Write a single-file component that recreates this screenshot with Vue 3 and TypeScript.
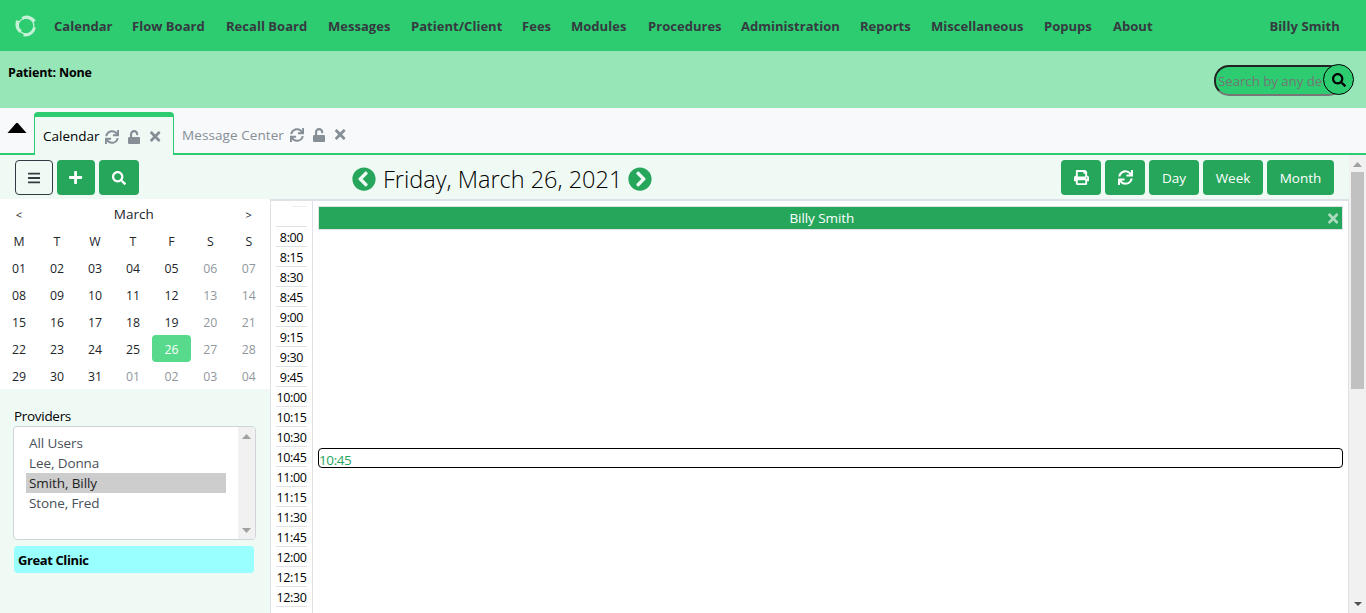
<script setup lang="ts">
import { h, type FunctionalComponent } from 'vue'

const icons: Record<string, [number, string]> = {
  sync: [512, 'M440.65 12.57l4 82.77A247.16 247.16 0 0 0 255.83 8C134.73 8 33.91 94.92 12.29 209.82A12 12 0 0 0 24.09 224h49.05a12 12 0 0 0 11.67-9.26 175.91 175.91 0 0 1 317-56.94l-101.46-4.86a12 12 0 0 0-12.57 12v47.41a12 12 0 0 0 12 12H500a12 12 0 0 0 12-12V12a12 12 0 0 0-12-12h-47.37a12 12 0 0 0-11.98 12.57zM255.83 432a175.61 175.61 0 0 1-146-77.8l101.8 4.87a12 12 0 0 0 12.57-12v-47.4a12 12 0 0 0-12-12H12a12 12 0 0 0-12 12V500a12 12 0 0 0 12 12h47.35a12 12 0 0 0 12-12.6l-4.15-82.57A247.17 247.17 0 0 0 255.83 504c121.11 0 221.93-86.92 243.55-201.82a12 12 0 0 0-11.8-14.18h-49.05a12 12 0 0 0-11.67 9.26A175.86 175.86 0 0 1 255.83 432z'],
  unlock: [448, 'M400 256H152V152.9c0-39.6 31.7-72.5 71.3-72.9 40-.4 72.7 32.1 72.7 72v16c0 13.3 10.7 24 24 24h32c13.3 0 24-10.7 24-24v-16C376 68 307.5-.3 223.5 0 139.5.3 72 69.5 72 153.5V256H48c-26.5 0-48 21.5-48 48v160c0 26.5 21.5 48 48 48h352c26.5 0 48-21.5 48-48V304c0-26.5-21.5-48-48-48z'],
  times: [352, 'M242.72 256l100.07-100.07c12.28-12.28 12.28-32.19 0-44.48l-22.24-22.24c-12.28-12.28-32.19-12.28-44.48 0L176 189.28 75.93 89.21c-12.28-12.28-32.19-12.28-44.48 0L9.21 111.45c-12.28 12.28-12.28 32.19 0 44.48L109.28 256 9.21 356.07c-12.28 12.28-12.28 32.19 0 44.48l22.24 22.24c12.28 12.28 32.2 12.28 44.48 0L176 322.72l100.07 100.07c12.28 12.28 32.2 12.28 44.48 0l22.24-22.24c12.28-12.28 12.28-32.19 0-44.48L242.72 256z'],
  search: [512, 'M505 442.7L405.3 343c-4.5-4.5-10.6-7-17-7H372c27.6-35.3 44-79.7 44-128C416 93.1 322.9 0 208 0S0 93.1 0 208s93.1 208 208 208c48.3 0 92.7-16.4 128-44v16.3c0 6.4 2.5 12.5 7 17l99.7 99.7c9.4 9.4 24.6 9.4 33.9 0l28.3-28.3c9.4-9.4 9.4-24.6.1-34zM208 336c-70.7 0-128-57.2-128-128 0-70.7 57.2-128 128-128 70.7 0 128 57.2 128 128 0 70.7-57.2 128-128 128z'],
  print: [512, 'M448 192V77.25c0-8.49-3.37-16.62-9.37-22.63L393.37 9.37c-6-6-14.14-9.37-22.63-9.37H96C78.33 0 64 14.33 64 32v160c-35.35 0-64 28.65-64 64v112c0 8.84 7.16 16 16 16h48v96c0 17.67 14.33 32 32 32h320c17.67 0 32-14.33 32-32v-96h48c8.84 0 16-7.16 16-16V256c0-35.35-28.65-64-64-64zm-64 256H128v-96h256v96zm0-224H128V64h192v48c0 8.84 7.16 16 16 16h48v96zm48 72c-13.25 0-24-10.75-24-24 0-13.26 10.75-24 24-24s24 10.74 24 24c0 13.25-10.75 24-24 24z'],
  plus: [448, 'M416 208H272V64c0-17.67-14.33-32-32-32h-32c-17.67 0-32 14.33-32 32v144H32c-17.67 0-32 14.33-32 32v32c0 17.67 14.33 32 32 32h144v144c0 17.67 14.33 32 32 32h32c17.67 0 32-14.33 32-32V304h144c17.67 0 32-14.33 32-32v-32c0-17.67-14.33-32-32-32z'],
  bars: [448, 'M16 132h416c8.837 0 16-7.163 16-16V76c0-8.837-7.163-16-16-16H16C7.163 60 0 67.163 0 76v40c0 8.837 7.163 16 16 16zm0 160h416c8.837 0 16-7.163 16-16v-40c0-8.837-7.163-16-16-16H16c-8.837 0-16 7.163-16 16v40c0 8.837 7.163 16 16 16zm0 160h416c8.837 0 16-7.163 16-16v-40c0-8.837-7.163-16-16-16H16c-8.837 0-16 7.163-16 16v40c0 8.837 7.163 16 16 16z'],
  left: [512, 'M256 504C119 504 8 393 8 256S119 8 256 8s248 111 248 248-111 248-248 248zM142.1 273l135.5 135.5c9.4 9.4 24.6 9.4 33.9 0l17-17c9.4-9.4 9.4-24.6 0-33.9L226.9 256l101.6-101.6c9.4-9.4 9.4-24.6 0-33.9l-17-17c-9.4-9.4-24.6-9.4-33.9 0L142.1 239c-9.4 9.4-9.4 24.6 0 34z'],
}

const Icon: FunctionalComponent<{ name: string; size: number }> = (props) => {
  const [width, d] = icons[props.name]
  return h(
    'svg',
    { viewBox: `0 0 ${width} 512`, width: (props.size * width) / 512, height: props.size, fill: 'currentColor' },
    [h('path', { d })],
  )
}
Icon.props = ['name', 'size']

const menu = ['Calendar', 'Flow Board', 'Recall Board', 'Messages', 'Patient/Client', 'Fees', 'Modules', 'Procedures', 'Administration', 'Reports', 'Miscellaneous', 'Popups', 'About']
const weekdays = ['M', 'T', 'W', 'T', 'F', 'S', 'S']
const days = Array.from({ length: 35 }, (_, i) => {
  const n = i < 31 ? i + 1 : i - 30
  return {
    label: String(n).padStart(2, '0'),
    muted: i > 30 || i % 7 > 4,
    selected: i === 25,
  }
})
const slots = Array.from({ length: 19 }, (_, i) => {
  const minutes = 480 + i * 15
  return `${Math.floor(minutes / 60)}:${String(minutes % 60).padStart(2, '0')}`
})
const providers = ['All Users', 'Lee, Donna', 'Smith, Billy', 'Stone, Fred']
const tabs = [
  { label: 'Calendar', active: true },
  { label: 'Message Center', active: false },
]
</script>

<template>
  <div class="app">
    <header class="topbar">
      <svg class="logo" width="22" height="22" viewBox="0 0 22 22" fill="none" stroke="#c5f1d7">
        <circle cx="11" cy="11" r="7.9" stroke-width="1.3" />
        <path d="M7.2 3.4C11 .9 16.5 2 19.6 6.4" stroke-width="3" />
        <path d="M2.6 5.6C1.2 10.6 2.8 14.4 5.8 16.6" stroke-width="3.2" />
        <path d="M8.5 19.8C14 20.8 18.4 17.4 19.6 12.4" stroke-width="2.8" />
      </svg>
      <nav class="menu"><span v-for="m in menu" :key="m">{{ m }}</span></nav>
      <span class="user">Billy Smith</span>
    </header>

    <section class="patient">
      <strong>Patient: None</strong>
      <div class="search">
        <div class="search-input">Search by any de</div>
        <button class="search-btn"><Icon name="search" :size="14" /></button>
      </div>
    </section>

    <div class="tabs">
      <div class="collapse"><svg width="20" height="12" viewBox="0 0 20 12"><path d="M.5 11L9 1.2q1-1 2 0L19.5 11z" /></svg></div>
      <div v-for="t in tabs" :key="t.label" class="tab" :class="{ active: t.active }">
        <span class="tab-label">{{ t.label }}</span>
        <Icon name="sync" :size="14" /><Icon name="unlock" :size="14" /><Icon name="times" :size="15" />
      </div>
      <div class="tabs-rest"></div>
    </div>

    <div class="body">
      <main class="main">
        <div class="toolbar">
          <div class="group">
            <button class="btn outline"><Icon name="bars" :size="14" /></button>
            <button class="btn plus"><Icon name="plus" :size="15" /></button>
            <button class="btn"><Icon name="search" :size="14" /></button>
          </div>
          <div class="date">
            <Icon name="left" :size="24" />
            <h1>Friday, March 26, 2021</h1>
            <Icon class="flip" name="left" :size="24" />
          </div>
          <div class="group">
            <button class="btn"><Icon name="print" :size="15" /></button>
            <button class="btn"><Icon name="sync" :size="15" /></button>
            <button class="btn day">Day</button>
            <button class="btn week">Week</button>
            <button class="btn month">Month</button>
          </div>
        </div>

        <div class="content">
          <aside class="side">
            <div class="mini">
              <span class="arrow">&lt;</span><span class="month-name">March</span><span class="arrow">&gt;</span>
              <span v-for="(w, i) in weekdays" :key="'w' + i">{{ w }}</span>
              <span v-for="(d, i) in days" :key="i" :class="{ muted: d.muted, selected: d.selected }">{{ d.label }}</span>
            </div>
            <div class="label">Providers</div>
            <div class="list">
              <ul>
                <li v-for="p in providers" :key="p" :class="{ chosen: p === 'Smith, Billy' }">{{ p }}</li>
              </ul>
              <div class="list-scroll">
                <svg width="9" height="5" viewBox="0 0 9 5"><path d="M0 5L4.5 0 9 5z" /></svg>
                <svg width="9" height="5" viewBox="0 0 9 5"><path d="M0 0L4.5 5 9 0z" /></svg>
              </div>
            </div>
            <div class="clinic">Great Clinic</div>
          </aside>

          <div class="times">
            <div class="times-head"><i></i></div>
            <div v-for="s in slots" :key="s" class="slot">{{ s }}</div>
          </div>

          <div class="schedule">
            <div class="provider"><span>Billy Smith</span><Icon name="times" :size="15" /></div>
            <div class="hover-slot">10:45</div>
          </div>
        </div>
      </main>

      <div class="scrollbar">
        <svg class="up" width="9" height="5" viewBox="0 0 9 5"><path d="M0 5L4.5 0 9 5z" /></svg>
        <div class="thumb"></div>
        <svg class="down" width="8" height="4" viewBox="0 0 8 4"><path d="M0 0L4 4 8 0z" /></svg>
      </div>
    </div>
  </div>
</template>

<style>
body { margin: 0; overflow: hidden; }
</style>

<style scoped>
* { box-sizing: border-box; }
.app { width: 1366px; height: 613px; overflow: hidden; display: flex; flex-direction: column; background: #fff; color: #000; font: 13.5px/20px "Open Sans", "Noto Sans", sans-serif; }
svg { display: block; flex: none; }
button { font: inherit; padding: 0; }
.topbar { height: 51px; flex: none; display: flex; align-items: center; padding: 0 26px 0 15px; background: #2ecc71; color: #343a40; font-weight: 700; font-size: 13px; white-space: nowrap; }
.topbar .menu { margin-left: 17px; display: grid; grid-template-columns: 78px 94px 102px 83px 111px 49px 77px 93px 119px 71px 113px 69px 60px; letter-spacing: .03px; }
.user { margin-left: auto; letter-spacing: .1px; }
.patient { height: 57px; flex: none; display: flex; justify-content: space-between; padding: 11px 12px 0 8px; background: #97e6b8; font-size: 12.5px; }
.patient strong { margin-top: 1px; letter-spacing: -.17px; }
.search { width: 140px; height: 32px; margin-top: 2px; position: relative; }
.search-input { width: 130px; height: 31px; margin-top: 1px; padding: 4px 0 0 2px; border: 2px solid; border-color: #222 #767676 #767676 #222; border-radius: 15px; background: #2ecc71; color: #757575; font-size: 13.2px; white-space: nowrap; }
.search-btn { position: absolute; right: 0; top: 0; width: 31px; height: 31px; border: 1px solid #000; border-radius: 50%; background: #2ecc71; color: #000; display: grid; place-items: center; }
.tabs { height: 47px; flex: none; display: flex; background: #f8f9fb; color: #868e96; }
.collapse { width: 34px; padding: 14px 0 0 7px; border-bottom: 2px solid #2ecc71; }
.collapse svg { fill: #000; }
.tab { width: 172px; margin-top: 4px; padding: 4px 0 0 8px; display: flex; align-items: center; gap: 9px; border-bottom: 2px solid #2ecc71; white-space: nowrap; }
.tab svg:last-child { margin-left: 1px; }
.tab-label { width: 103px; margin-right: -4px; letter-spacing: .08px; }
.tab.active { width: 140px; padding-left: 8px; padding-top: 1px; border: 1px solid #2ecc71; border-top-width: 5px; border-bottom: 0; border-radius: 4px 4px 0 0; background: #f0faf5; }
.tab.active .tab-label { width: 57px; margin: -2px -4px 0 0; letter-spacing: 0; color: #000; }
.tabs-rest { flex: 1; border-bottom: 2px solid #2ecc71; }
.body { flex: 1; display: flex; min-height: 0; }
.main { width: 1349px; display: flex; flex-direction: column; }
.toolbar { height: 44px; flex: none; padding: 5px 15px 4px; display: grid; grid-template-columns: 337px 1fr auto; background: #f0faf5; }
.group { display: flex; gap: 4px; }
.btn { width: 40px; height: 35px; border: 0; border-radius: 4px; background: #26a65b; color: #fff; display: grid; place-items: center; font-weight: 500; font-size: 13.5px; }
.btn.outline { width: 38px; background: transparent; border: 1px solid #343a40; color: #343a40; }
.btn.plus { width: 38px; }
.btn.day { width: 50px; }
.btn.week { width: 60px; }
.btn.month { width: 67px; }
.date { display: flex; align-items: center; gap: 7px; height: 38px; color: #26a65b; }
.date h1 { margin: 0; font-weight: 300; font-size: 23.5px; line-height: 36px; width: 238px; color: #000; white-space: nowrap; }
.flip { transform: scaleX(-1); }
.content { flex: 1; display: flex; min-height: 0; }
.side { width: 270px; background: #f0faf5; }
.mini { height: 190px; display: grid; grid-template-columns: repeat(4, 38px) 39px 38.5px 38.5px; grid-template-rows: 28px; grid-auto-rows: 27px; background: #fff; color: #212529; font-size: 12.3px; text-align: center; }
.mini > span { line-height: 29px; }
.mini .arrow { line-height: 31px; font-size: 11px; }
.mini .month-name { grid-column: span 5; font-size: 13.5px; line-height: 30px; }
.mini .muted { color: #90979d; }
.mini .selected { background: #57da8c; color: #fff; border-radius: 4px; }
.label { margin: 17px 0 0 14px; letter-spacing: -.3px; }
.list { width: 243px; height: 114px; margin-left: 13px; display: flex; justify-content: space-between; border: 1px solid #ced4da; border-radius: 4px; background: #fff; overflow: hidden; color: #495057; }
.list ul { list-style: none; width: 200px; margin: 6px 0 0 12px; padding: 0; letter-spacing: -.1px; }
.list li { height: 20px; padding-left: 3px; }
.list .chosen { background: #cdcdcd; color: #222; }
.list-scroll { width: 17px; padding: 7px 0 6px 4px; display: flex; flex-direction: column; justify-content: space-between; background: #f1f1f1; fill: #a0a0a0; }
.clinic { width: 240px; height: 27px; margin: 6px 0 0 14px; padding: 4px 4px; border-radius: 4px; background: #9ff; font-weight: 700; font-size: 13px; letter-spacing: -.4px; }
.times { width: 43px; padding: 0 5px; border: 1px solid #dee2e6; border-top-width: 2px; border-bottom: 0; font-size: 12.5px; }
.times-head { height: 26px; padding: 5px 0 0 16px; border-bottom: 1px solid #dee2e6; }
.times-head i { display: block; height: 1px; background: #eee; }
.slot { height: 20px; line-height: 21px; border-bottom: 1px solid #dee2e6; text-align: center; white-space: nowrap; letter-spacing: -.35px; }
.schedule { flex: 1; padding: 5px 5px 0; border-top: 2px solid #dee2e6; border-right: 1px solid #dee2e6; }
.provider { height: 24px; display: flex; align-items: center; background: #26a65b; border: 1px solid #dee2e6; color: #fff; }
.provider span { flex: 1; text-align: center; padding-right: 3px; letter-spacing: -.08px; }
.provider svg { color: #a8dbbd; margin-right: 4px; }
.hover-slot { height: 20px; margin-top: 218px; padding-top: 1px; border: 1px solid #000; border-radius: 4px; color: #26a65b; letter-spacing: -.4px; }
.scrollbar { width: 17px; display: flex; flex-direction: column; align-items: center; background: #f1f1f1; }
.scrollbar .up { margin-top: 7px; fill: #a0a0a0; }
.thumb { width: 13px; height: 217px; margin-top: 5px; background: #c1c1c1; }
.scrollbar .down { margin-top: auto; margin-bottom: 7px; fill: #505050; }
</style>
